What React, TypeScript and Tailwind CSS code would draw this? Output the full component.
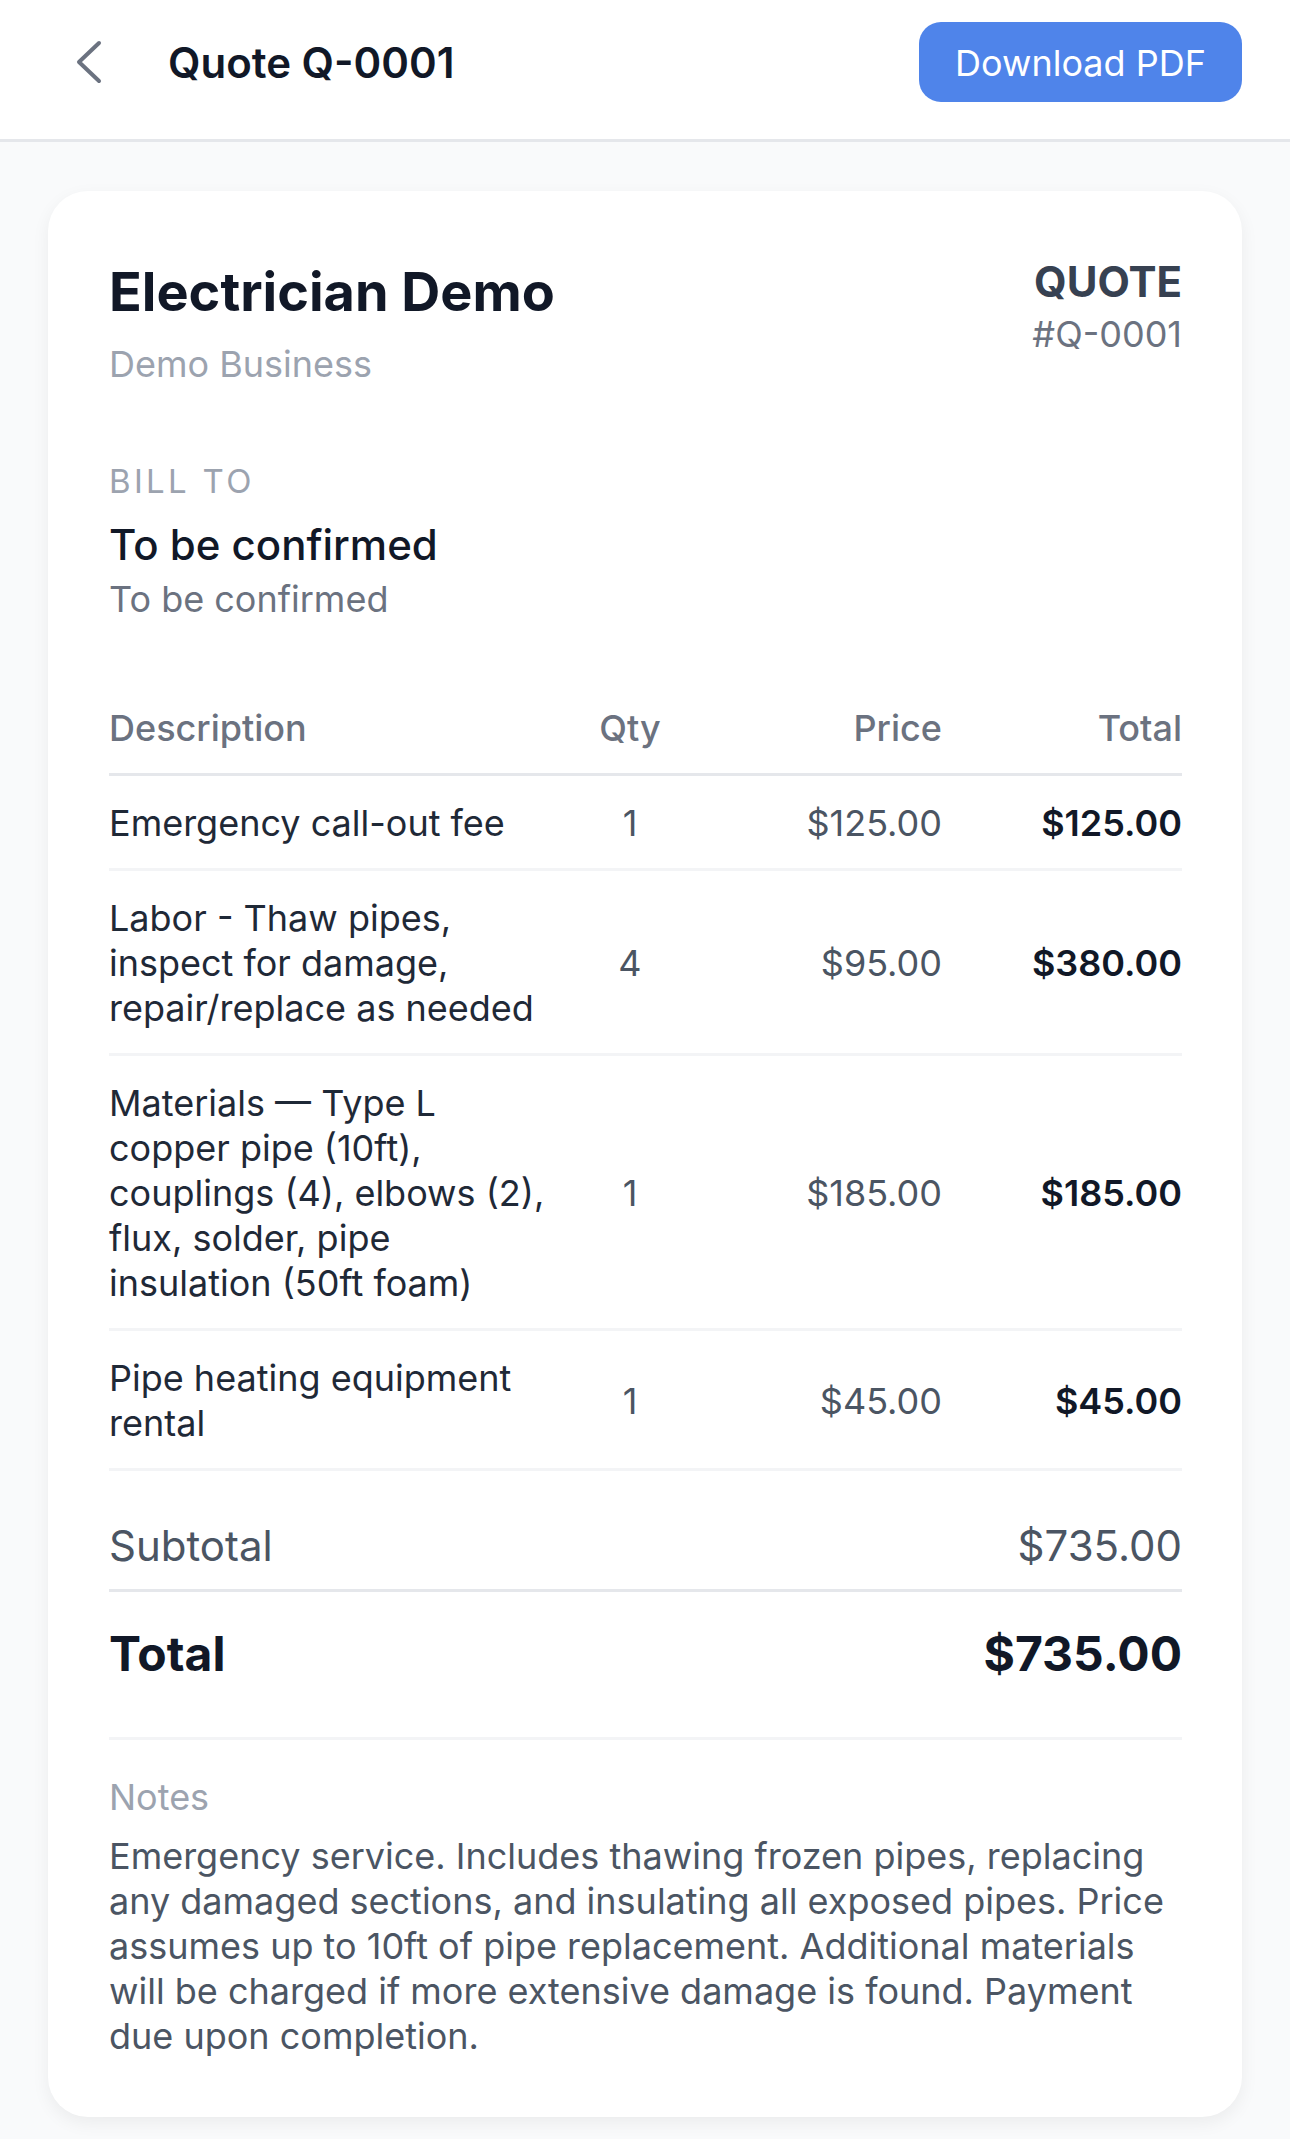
import React from 'react';

const items = [
  { id: 1, description: 'Emergency call-out fee', qty: 1, price: '$125.00', total: '$125.00' },
  { id: 2, description: 'Labor - Thaw pipes, inspect for damage, repair/replace as needed', qty: 4, price: '$95.00', total: '$380.00' },
  {
    id: 3,
    description: 'Materials — Type L copper pipe (10ft), couplings (4), elbows (2), flux, solder, pipe insulation (50ft foam)',
    qty: 1,
    price: '$185.00',
    total: '$185.00',
  },
  { id: 4, description: 'Pipe heating equipment rental', qty: 1, price: '$45.00', total: '$45.00' },
];

function BackChevron() {
  return (
    <svg width="26" height="44" viewBox="0 0 26 44" fill="none">
      <polyline
        points="23,3 3,22 23,41"
        stroke="#6b7280"
        strokeWidth="4"
        strokeLinecap="round"
        strokeLinejoin="round"
      />
    </svg>
  );
}

export default function App() {
  return (
    <div className="min-h-screen bg-[#f9fafb] font-['Inter','Noto_Sans',sans-serif] antialiased">
      <header className="flex items-center justify-between bg-white px-[48px] pt-[22px] pb-[37px] border-b-[3px] border-[#e5e7eb]">
        <div className="flex items-center">
          <button className="w-[82px] h-[80px] flex items-center justify-center">
            <BackChevron />
          </button>
          <h1 className="ml-[38px] text-[42px] font-semibold text-[#111827]">Quote Q-0001</h1>
        </div>
        <button className="w-[323px] h-[80px] rounded-[22px] bg-[#4f84ea] text-white text-[36px] leading-none pt-[2px]">
          Download PDF
        </button>
      </header>

      <main className="pt-[49px] px-[48px] pb-[48px]">
        <div className="bg-white rounded-[40px] shadow-[0_6px_18px_rgba(0,0,0,0.06)] pt-[65px] pl-[61px] pr-[60px] pb-[58px]">
          {/* business + quote number */}
          <div className="flex items-start justify-between">
            <div>
              <h2 className="text-[54px] leading-[72px] font-bold text-[#111827]">Electrician Demo</h2>
              <p className="mt-[14px] text-[36px] leading-[45px] text-[#9ca3af]">Demo Business</p>
            </div>
            <div className="text-right">
              <p className="text-[42px] leading-[52px] font-bold text-[#374151]">QUOTE</p>
              <p className="mt-[4px] text-[36px] leading-[45px] text-[#6b7280]">#Q-0001</p>
            </div>
          </div>

          {/* bill to */}
          <div className="mt-[72px]">
            <p className="text-[33px] leading-[45px] text-[#9ca3af] uppercase tracking-[0.1em]">Bill To</p>
            <p className="mt-[16px] text-[42px] leading-[50px] font-medium text-[#111827]">To be confirmed</p>
            <p className="mt-[7px] text-[36px] leading-[45px] text-[#6b7280]">To be confirmed</p>
          </div>

          {/* line items */}
          <div className="mt-[84px]">
            <div className="grid grid-cols-[1fr_100px_262px_240px] pb-[22px] border-b-[3px] border-[#e5e7eb] text-[36px] leading-[45px] font-medium text-[#6b7280]">
              <div>Description</div>
              <div className="text-center">Qty</div>
              <div className="text-right">Price</div>
              <div className="text-right">Total</div>
            </div>
            {items.map((item) => (
              <div
                key={item.id}
                className="grid grid-cols-[1fr_100px_262px_240px] items-center pt-[25px] pb-[22px] border-b-[3px] border-[#f3f4f6] text-[36px] leading-[45px]"
              >
                <div className="pr-[32px] text-[#1f2937]">{item.description}</div>
                <div className="text-center text-[#4b5563]">{item.qty}</div>
                <div className="text-right text-[#4b5563]">{item.price}</div>
                <div className="text-right font-semibold text-[#111827]">{item.total}</div>
              </div>
            ))}
          </div>

          {/* totals */}
          <div className="pt-[50px]">
            <div className="flex items-center justify-between pb-[18px] border-b-[3px] border-[#e5e7eb] text-[42px] leading-[50px] text-[#4b5563]">
              <span>Subtotal</span>
              <span>$735.00</span>
            </div>
            <div className="flex items-center justify-between pt-[33px] text-[48px] leading-[58px] font-bold text-[#111827]">
              <span>Total</span>
              <span>$735.00</span>
            </div>
          </div>

          {/* notes */}
          <div className="mt-[54px] pt-[35px] border-t-[3px] border-[#f3f4f6]">
            <p className="text-[36px] leading-[45px] text-[#9ca3af]">Notes</p>
            <p className="mt-[14px] text-[36px] leading-[45px] text-[#4b5563]">
              Emergency service. Includes thawing frozen pipes, replacing any damaged sections, and insulating all
              exposed pipes. Price assumes up to 10ft of pipe replacement. Additional materials will be charged if
              more extensive damage is found. Payment due upon completion.
            </p>
          </div>
        </div>
      </main>
    </div>
  );
}
